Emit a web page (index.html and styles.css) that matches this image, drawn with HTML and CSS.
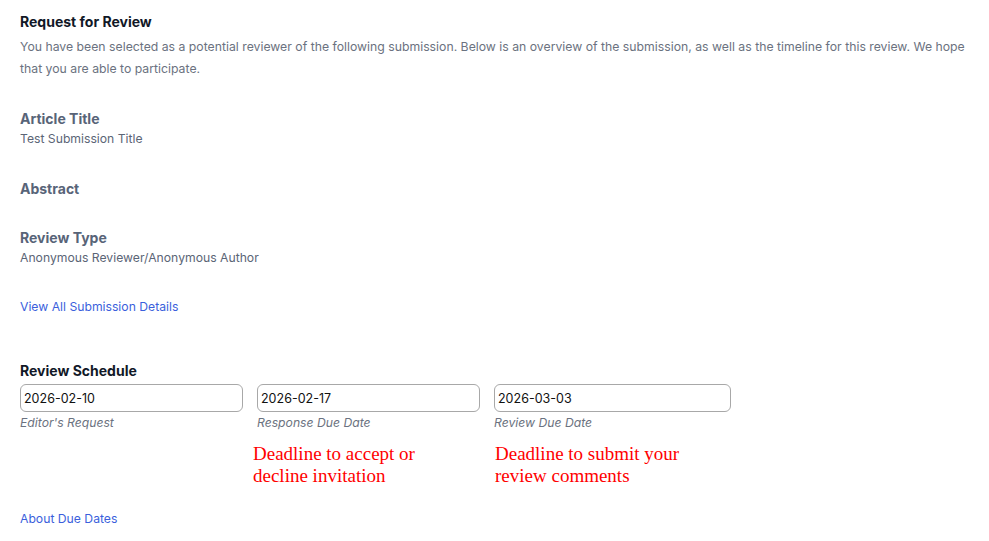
FILE: index.html
```html
<!DOCTYPE html>
<html lang="en">
<head>
<meta charset="utf-8">
<link rel="stylesheet" href="styles.css">
</head>
<body>
<main class="page">
  <section class="intro">
    <h1 class="title">Request for Review</h1>
    <p class="lead">You have been selected as a potential reviewer of the following submission. Below is an overview of the submission, as well as the timeline for this review. We hope that you are able to participate.</p>
  </section>

  <section class="field">
    <h2 class="field-label">Article Title</h2>
    <div class="field-value">Test Submission Title</div>
  </section>

  <section class="field">
    <h2 class="field-label">Abstract</h2>
    <div class="field-value"></div>
  </section>

  <section class="field">
    <h2 class="field-label">Review Type</h2>
    <div class="field-value">Anonymous Reviewer/Anonymous Author</div>
  </section>

  <a class="link details-link" href="#">View All Submission Details</a>

  <section class="schedule">
    <h2 class="schedule-title">Review Schedule</h2>
    <div class="dates">
      <div class="date">
        <input class="date-input" type="text" value="2026-02-10">
        <div class="date-label">Editor's Request</div>
      </div>
      <div class="date">
        <input class="date-input" type="text" value="2026-02-17">
        <div class="date-label">Response Due Date</div>
        <div class="note note-left">Deadline to accept or<br>decline invitation</div>
      </div>
      <div class="date">
        <input class="date-input" type="text" value="2026-03-03">
        <div class="date-label">Review Due Date</div>
        <div class="note note-right">Deadline to submit your<br>review comments</div>
      </div>
    </div>
  </section>

  <a class="link due-link" href="#">About Due Dates</a>
</main>
</body>
</html>
```

FILE: styles.css
```css
html, body {
  margin: 0;
  padding: 0;
  background: #ffffff;
}

.page {
  font-family: Inter, "Noto Sans", sans-serif;
  padding: 12px 12px 0 20px;
  width: 957px;
}

.title {
  margin: 0;
  font-size: 14px;
  line-height: 20px;
  font-weight: 700;
  color: #111827;
}

.lead {
  margin: 4px 0 0 0;
  font-size: 12.25px;
  line-height: 22px;
  color: #6b7280;
}

.field {
  margin-top: 29px;
}

.field + .field {
  margin-top: 30px;
}

.field + .field + .field {
  margin-top: 29px;
}

.field-label {
  margin: 0;
  font-size: 14px;
  line-height: 20px;
  font-weight: 700;
  color: #586478;
}

.field-value {
  font-size: 12.2px;
  line-height: 20px;
  color: #5b6576;
}

.field-value:empty {
  display: none;
}

.link {
  display: block;
  width: max-content;
  font-size: 12.2px;
  line-height: 20px;
  color: #3b5fdc;
  text-decoration: none;
}

.details-link {
  margin-top: 29px;
}

.schedule {
  margin-top: 44px;
}

.schedule-title {
  margin: 0;
  font-size: 14px;
  line-height: 20px;
  font-weight: 700;
  color: #111827;
}

.dates {
  display: grid;
  grid-template-columns: 223px 223px 237px;
  column-gap: 14px;
  margin-top: 3px;
}

.date {
  display: flex;
  flex-direction: column;
}

.date-input {
  box-sizing: border-box;
  width: 223px;
  height: 28px;
  margin: 0;
  padding: 0 3px;
  border: 1px solid #a8a8a8;
  border-radius: 6px;
  font-family: Inter, "Noto Sans", sans-serif;
  font-size: 12.5px;
  color: #111111;
  background: #ffffff;
}

.date:last-child .date-input {
  width: 237px;
}

.date-label {
  margin-top: 2px;
  font-size: 12.2px;
  line-height: 18px;
  font-style: italic;
  color: #6b7280;
}

.note {
  margin-top: 11px;
  font-family: "Liberation Serif", "DejaVu Serif", serif;
  font-size: 19px;
  line-height: 22px;
  color: #ff0000;
}

.note-left {
  margin-left: -4px;
}

.note-right {
  margin-left: 1px;
}

.due-link {
  margin-top: 22px;
}
```
